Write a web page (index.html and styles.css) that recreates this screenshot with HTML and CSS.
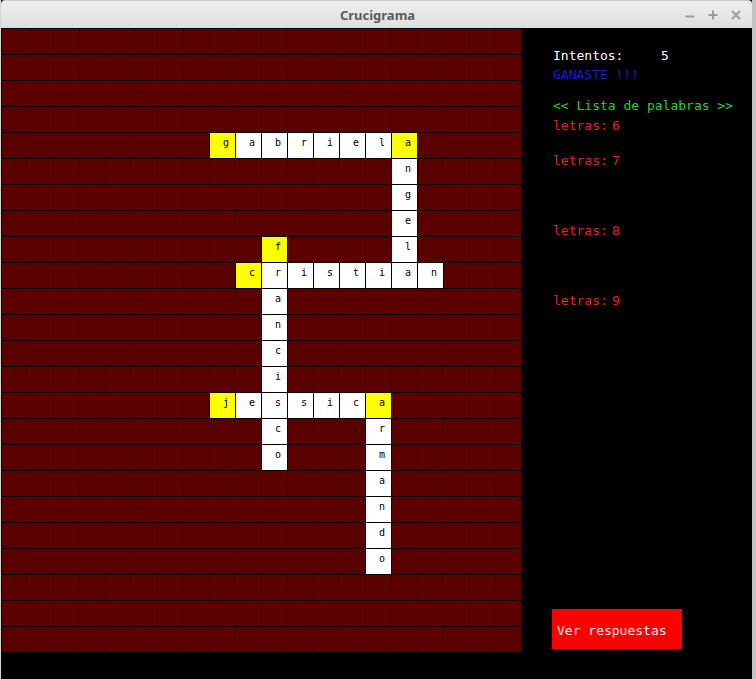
FILE: index.html
```html
<!DOCTYPE html>
<html lang="es">
<head>
<meta charset="utf-8">
<title>Crucigrama</title>
<link rel="stylesheet" href="styles.css">
</head>
<body>
<div class="window">
  <header class="titlebar">
    <span class="title">Crucigrama</span>
    <div class="controls">
      <svg class="ctl" width="12" height="12" viewBox="0 0 12 12"><path d="M1.5 7.5h9" /></svg>
      <svg class="ctl" width="12" height="12" viewBox="0 0 12 12"><path d="M1.5 6h9M6 1.5v9" /></svg>
      <svg class="ctl" width="12" height="12" viewBox="0 0 12 12"><path d="M2 2l8 8M10 2l-8 8" /></svg>
    </div>
  </header>
  <main class="content">
    <div class="board">
      <div class="cell hint" style="grid-area:5/9">g</div>
      <div class="cell" style="grid-area:5/10">a</div>
      <div class="cell" style="grid-area:5/11">b</div>
      <div class="cell" style="grid-area:5/12">r</div>
      <div class="cell" style="grid-area:5/13">i</div>
      <div class="cell" style="grid-area:5/14">e</div>
      <div class="cell" style="grid-area:5/15">l</div>
      <div class="cell hint" style="grid-area:5/16">a</div>
      <div class="cell" style="grid-area:6/16">n</div>
      <div class="cell" style="grid-area:7/16">g</div>
      <div class="cell" style="grid-area:8/16">e</div>
      <div class="cell" style="grid-area:9/16">l</div>
      <div class="cell hint" style="grid-area:9/11">f</div>
      <div class="cell hint" style="grid-area:10/10">c</div>
      <div class="cell" style="grid-area:10/11">r</div>
      <div class="cell" style="grid-area:10/12">i</div>
      <div class="cell" style="grid-area:10/13">s</div>
      <div class="cell" style="grid-area:10/14">t</div>
      <div class="cell" style="grid-area:10/15">i</div>
      <div class="cell" style="grid-area:10/16">a</div>
      <div class="cell" style="grid-area:10/17">n</div>
      <div class="cell" style="grid-area:11/11">a</div>
      <div class="cell" style="grid-area:12/11">n</div>
      <div class="cell" style="grid-area:13/11">c</div>
      <div class="cell" style="grid-area:14/11">i</div>
      <div class="cell hint" style="grid-area:15/9">j</div>
      <div class="cell" style="grid-area:15/10">e</div>
      <div class="cell" style="grid-area:15/11">s</div>
      <div class="cell" style="grid-area:15/12">s</div>
      <div class="cell" style="grid-area:15/13">i</div>
      <div class="cell" style="grid-area:15/14">c</div>
      <div class="cell hint" style="grid-area:15/15">a</div>
      <div class="cell" style="grid-area:16/11">c</div>
      <div class="cell" style="grid-area:17/11">o</div>
      <div class="cell" style="grid-area:16/15">r</div>
      <div class="cell" style="grid-area:17/15">m</div>
      <div class="cell" style="grid-area:18/15">a</div>
      <div class="cell" style="grid-area:19/15">n</div>
      <div class="cell" style="grid-area:20/15">d</div>
      <div class="cell" style="grid-area:21/15">o</div>
    </div>
    <aside class="panel">
      <div class="line attempts"><span class="label-wide">Intentos:</span>5</div>
      <div class="line won">GANASTE !!!</div>
      <div class="line list-title">&lt;&lt; Lista de palabras &gt;&gt;</div>
      <div class="words">
        <div class="line group"><span class="label">letras:</span>6</div>
        <div class="line group"><span class="label">letras:</span>7</div>
        <div class="slot"></div>
        <div class="line group"><span class="label">letras:</span>8</div>
        <div class="slot"></div>
        <div class="line group"><span class="label">letras:</span>9</div>
      </div>
      <div class="answers" role="button">Ver respuestas</div>
    </aside>
  </main>
</div>
</body>
</html>
```

FILE: styles.css
```css
* { box-sizing: border-box; }

html, body {
  margin: 0;
  padding: 0;
  background: #bdbdbd;
}

.window {
  width: 756px;
  height: 679px;
  display: flex;
  flex-direction: column;
  border-left: 1px solid #d4d4d4;
  border-right: 4px solid #c2c2c2;
  background: #000;
  overflow: hidden;
}

.titlebar {
  height: 28px;
  flex: none;
  position: relative;
  display: flex;
  align-items: center;
  justify-content: center;
  background: linear-gradient(#efefef, #dedede);
  border-top: 1px solid #c9c9c9;
  border-radius: 4px 4px 0 0;
}

.title {
  font-family: "Noto Sans", "Open Sans", sans-serif;
  font-weight: bold;
  font-size: 13px;
  color: #5c5c5c;
  padding-left: 2px;
}

.controls {
  position: absolute;
  right: 10px;
  top: 8px;
  display: flex;
  gap: 11px;
}

.ctl {
  display: block;
  fill: none;
  stroke: #9d9d9d;
  stroke-width: 2;
}

.content {
  flex: 1;
  display: flex;
  background: #000;
}

.board {
  flex: none;
  width: 521px;
  height: 625px;
  padding: 1px;
  display: grid;
  grid-template-columns: repeat(20, 25px);
  grid-template-rows: repeat(24, 25px);
  gap: 1px;
  background-color: #5a0000;
  background-image:
    linear-gradient(to right, #0a0000 1px, transparent 1px),
    linear-gradient(to bottom, #0a0000 1px, transparent 1px);
  background-size: 26px 26px;
}

.cell {
  background: #ffffff;
  font-family: "DejaVu Sans Mono", monospace;
  font-size: 10px;
  line-height: 11px;
  color: #000;
  padding: 4px 0 0 13px;
}

.cell.hint {
  background: #ffff00;
}

.panel {
  flex: 1;
  display: flex;
  flex-direction: column;
  align-items: flex-start;
  padding: 21px 0 30px 31px;
  font-family: "DejaVu Sans Mono", monospace;
  font-size: 13px;
}

.line {
  line-height: 13px;
  height: 13px;
  white-space: pre;
}

.label {
  display: inline-block;
  width: 59px;
}

.label-wide {
  display: inline-block;
  width: 108px;
}

.attempts { color: #ffffff; }

.won {
  color: #1c1cd2;
  margin-top: 6px;
}

.list-title {
  color: #33cc33;
  margin-top: 18px;
}

.words {
  margin-top: 7px;
  display: flex;
  flex-direction: column;
}

.group {
  color: #e02424;
  height: 35px;
}

.slot {
  height: 35px;
}

.answers {
  margin-top: auto;
  margin-left: -1px;
  width: 130px;
  height: 40px;
  background: #ff0000;
  color: #f2f2f2;
  font-size: 13px;
  line-height: 13px;
  white-space: pre;
  padding: 15px 0 0 5px;
  cursor: pointer;
}
```
